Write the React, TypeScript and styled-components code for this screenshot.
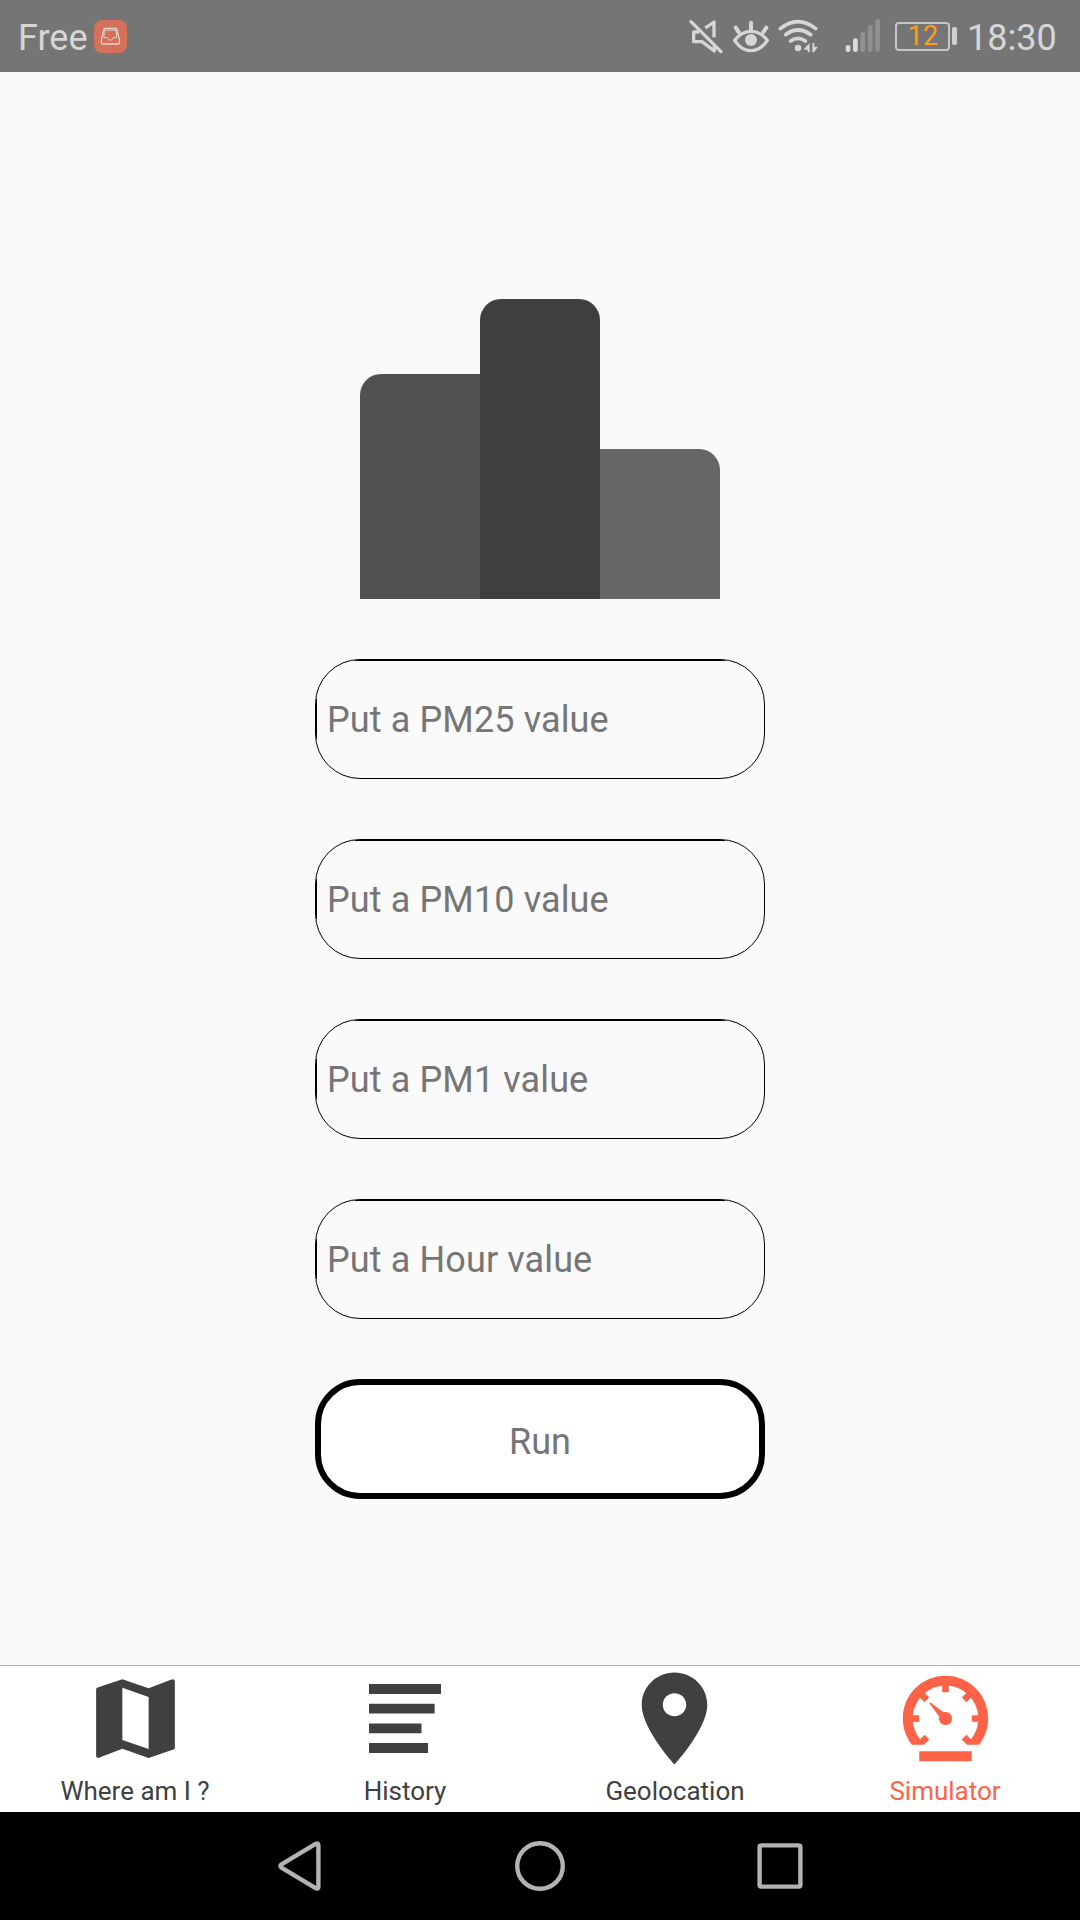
import React from "react";
import styled, { createGlobalStyle } from "styled-components";
import { IoMdMap, IoMdPin, IoMdSpeedometer } from "react-icons/io";

const GlobalStyle = createGlobalStyle`
  * { box-sizing: border-box; }
  body { margin: 0; background: #fafafa; font-family: Roboto, "Noto Sans", sans-serif; }
`;

const Screen = styled.div`
  display: flex;
  flex-direction: column;
  width: 1080px;
  height: 1920px;
  overflow: hidden;
  background: #fafafa;
`;

const StatusBar = styled.header`
  display: flex;
  align-items: center;
  height: 72px;
  padding: 0 24px 0 18px;
  background: #757575;
  color: #d6d6d6;
  font-size: 36px;
  line-height: 42px;
`;

const Carrier = styled.span`
  width: 76px;
  padding-top: 3px;
`;

const Badge = styled.span`
  display: flex;
  align-items: center;
  justify-content: center;
  width: 33px;
  height: 33px;
  margin-top: 1px;
  border-radius: 8px;
  background: #d5705b;
`;

const StatusIcons = styled.div`
  display: flex;
  align-items: center;
  margin-left: auto;
`;

const StatusIcon = styled.svg<{ $gap: number }>`
  display: block;
  height: 72px;
  margin-right: ${(p) => p.$gap}px;
  fill: none;
  stroke: #d6d6d6;
`;

const Battery = styled.span`
  display: flex;
  align-items: center;
  justify-content: center;
  width: 55px;
  height: 29px;
  border: 2px solid #c6c6c6;
  border-radius: 4px;
  color: #ff9c1a;
  font-size: 27px;
  line-height: 29px;
`;

const BatteryLevel = styled.span`
  margin: 1px 0 0 1px;
`;

const BatteryTip = styled.span`
  width: 5px;
  height: 18px;
  margin: 0 10px 0 2px;
  border-radius: 2px;
  background: #d0d0d0;
`;

const Clock = styled.span`
  width: 89px;
  padding-top: 3px;
  white-space: nowrap;
`;

const Content = styled.main`
  display: flex;
  flex: 1;
  flex-direction: column;
  align-items: center;
  padding-top: 227px;
`;

const Bars = styled.div`
  display: flex;
  align-items: flex-end;
  height: 300px;
`;

const Bar = styled.div<{ $height: number; $color: string; $radius: string }>`
  width: 120px;
  height: ${(p) => p.$height}px;
  border-radius: ${(p) => p.$radius};
  background: ${(p) => p.$color};
`;

const Form = styled.form`
  display: flex;
  flex-direction: column;
  gap: 60px;
  margin-top: 60px;
`;

const Field = styled.input`
  width: 450px;
  height: 120px;
  padding: 2px 12px 0 11px;
  border: 1px solid #000;
  border-radius: 45px;
  outline: none;
  background:
    linear-gradient(#000, #000) 39px 0 / 370px 1px no-repeat,
    linear-gradient(#000, #000) 0 39px / 1px 40px no-repeat;
  color: #404040;
  font: 36px/42px Roboto, "Noto Sans", sans-serif;
  letter-spacing: 0.12px;

  &::placeholder {
    color: #757575;
    opacity: 1;
  }
`;

const RunButton = styled.button`
  width: 450px;
  height: 120px;
  padding: 5px 0 0;
  border: 6px solid #000;
  border-radius: 45px;
  background: #fff;
  color: #757575;
  font: 36px/42px Roboto, "Noto Sans", sans-serif;
`;

const TabBar = styled.nav`
  display: grid;
  grid-template-columns: repeat(4, 1fr);
  height: 147px;
  border-top: 1px solid #b2b2b2;
  background: #fff;
`;

const Tab = styled.a<{ $active?: boolean }>`
  display: flex;
  flex-direction: column;
  align-items: center;
  color: ${(p) => (p.$active ? "#ff6347" : "#404040")};
  font-size: 26px;
  line-height: 32px;

  svg {
    display: block;
    flex: none;
    width: 105px;
    height: 105px;
  }
`;

const TabLabel = styled.span`
  margin-top: 4px;
`;

const NavBar = styled.footer`
  display: flex;
  align-items: center;
  justify-content: center;
  gap: 180px;
  height: 108px;
  background: #000;
`;

const NavIcon = styled.svg`
  display: block;
  width: 60px;
  height: 60px;
  fill: none;
  stroke: #b3b3b3;
  stroke-width: 4.4;
  stroke-linejoin: round;
`;

const PinIcon = styled(IoMdPin)`
  margin-right: 1px;
`;

const fields = ["Put a PM25 value", "Put a PM10 value", "Put a PM1 value", "Put a Hour value"];

const InboxIcon = () => (
  <svg width="21" height="19" viewBox="0 0 21 19" fill="none" stroke="#e3d5d1" strokeWidth="1.3" strokeLinejoin="round">
    <path d="M4.2 1.5h12.2l3 11.1v3.2q0 1.2-1.2 1.2H2.6q-1.2 0-1.2-1.2v-3.2z" />
    <path d="M4.6 3.2L3.8 10.6h3.8q.4 2.7 2.8 2.7t2.8-2.7h3.7L15.9 3.2z" strokeWidth=".9" />
  </svg>
);

const LinesIcon = () => (
  <svg viewBox="0 0 512 512" fill="currentColor">
    <path d="M78 88h351v48H78zM78 184h320v48H78zM78 280h256v48H78zM78 376h288v48H78z" />
  </svg>
);

const signal = [135, 115, 95, 75, 57];

export default function App() {
  return (
    <>
      <GlobalStyle />
      <Screen>
        <StatusBar>
          <Carrier>Free</Carrier>
          <Badge>
            <InboxIcon />
          </Badge>
          <StatusIcons>
            <StatusIcon $gap={10} width="34" viewBox="57 0 102 216" strokeWidth="10" strokeLinejoin="round">
              <path d="M87 96H71v29h25l37 28v-15M106 84l26-18v46" />
              <path d="M63 65l90 90" strokeLinecap="round" />
            </StatusIcon>
            <StatusIcon $gap={9} width="36" viewBox="189 0 108 216" strokeWidth="10" strokeLinecap="round">
              <path d="M194 121q20-27 49-27t49 27q-20 31-49 31t-49-31z" strokeLinejoin="round" />
              <circle cx="243" cy="120" r="18" fill="#d6d6d6" stroke="none" />
              <path d="M243 68v20M197 83l9 13M289 83l-9 13" strokeWidth="12" />
            </StatusIcon>
            <StatusIcon $gap={26} width="41" viewBox="324 0 123 216" strokeWidth="11" strokeLinecap="round">
              <path d="M331 86q53-42 106 0M347 104q37-28 75 0M362 123q22-16 44 0" />
              <circle cx="384" cy="144" r="10" fill="#d6d6d6" stroke="none" />
              <path d="M402 147l17-18v28h-6v-8h-11zM427 129v28h5l12-17h-11v-11z" fill="#d6d6d6" stroke="none" />
            </StatusIcon>
            <StatusIcon $gap={14} width="36" viewBox="525 0 108 216">
              {signal.map((top, i) => (
                <rect key={top} x={527 + i * 22.2} y={top} width="14" height={156 - top} rx="6" fill={i < 2 ? "#dcdcdc" : "#909090"} stroke="none" />
              ))}
            </StatusIcon>
            <Battery>
              <BatteryLevel>12</BatteryLevel>
            </Battery>
            <BatteryTip />
            <Clock>18:30</Clock>
          </StatusIcons>
        </StatusBar>

        <Content>
          <Bars>
            <Bar $height={225} $color="#515151" $radius="21px 0 0 0" />
            <Bar $height={300} $color="#3f3f3f" $radius="21px 21px 0 0" />
            <Bar $height={150} $color="#666666" $radius="0 21px 0 0" />
          </Bars>
          <Form onSubmit={(e) => e.preventDefault()}>
            {fields.map((label) => (
              <Field key={label} placeholder={label} />
            ))}
            <RunButton type="button">Run</RunButton>
          </Form>
        </Content>

        <TabBar>
          <Tab>
            <IoMdMap />
            <TabLabel>Where am I ?</TabLabel>
          </Tab>
          <Tab>
            <LinesIcon />
            <TabLabel>History</TabLabel>
          </Tab>
          <Tab>
            <PinIcon />
            <TabLabel>Geolocation</TabLabel>
          </Tab>
          <Tab $active>
            <IoMdSpeedometer />
            <TabLabel>Simulator</TabLabel>
          </Tab>
        </TabBar>

        <NavBar>
          <NavIcon viewBox="0 0 60 60">
            <path d="M11.5 28.4L46 7.7q2.4-1 2.4 1.6v41.4q0 2.6-2.4 1.6L11.5 31.6q-2.2-1.6 0-3.2z" />
          </NavIcon>
          <NavIcon viewBox="0 0 60 60">
            <circle cx="30" cy="30" r="22.8" />
          </NavIcon>
          <NavIcon viewBox="0 0 60 60">
            <rect x="9.6" y="9.4" width="40.8" height="41.2" rx="1.5" />
          </NavIcon>
        </NavBar>
      </Screen>
    </>
  );
}
